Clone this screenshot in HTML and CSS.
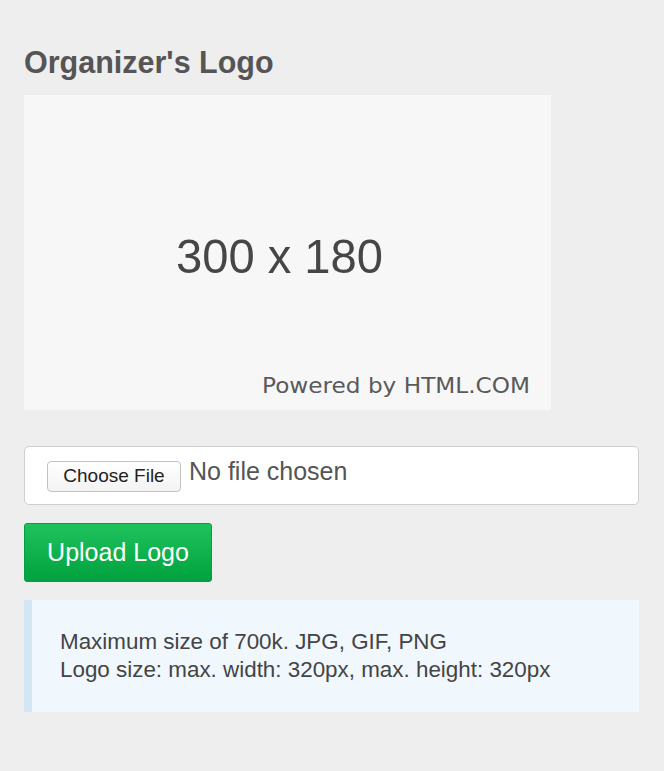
FILE: index.html
```html
<!DOCTYPE html>
<html lang="en">
<head>
    <meta charset="UTF-8">
    <meta name="viewport" content="width=device-width, initial-scale=1.0">
    <title>Organizer's Logo</title>
    <link rel="stylesheet" href="styles.css">
</head>
<body>
    <div class="logo-panel">
        <h2 class="panel-title">Organizer's Logo</h2>
        <div class="logo-preview">
            <svg width="527" height="315" viewBox="0 0 527 315">
                <rect width="527" height="315" fill="#f7f7f7"/>
                <text x="152" y="178" class="size-label" textLength="207" lengthAdjust="spacingAndGlyphs">300 x 180</text>
                <text x="238" y="298" class="powered-label" textLength="268" lengthAdjust="spacingAndGlyphs">Powered by HTML.COM</text>
            </svg>
        </div>
        <div class="file-field">
            <span class="choose-btn">Choose File</span>
            <span class="file-name">No file chosen</span>
        </div>
        <button class="upload-btn">Upload Logo</button>
        <div class="info-note">
            Maximum size of 700k. JPG, GIF, PNG<br>
            Logo size: max. width: 320px, max. height: 320px
        </div>
    </div>
</body>
</html>
```

FILE: styles.css
```css
body {
    margin: 0;
    background-color: #eeeeee;
    font-family: "Liberation Sans", Arial, sans-serif;
    color: #555;
}
.logo-panel {
    padding: 45px 25px 40px 24px;
    display: flex;
    flex-direction: column;
    align-items: flex-start;
}
.panel-title {
    margin: 0 0 16px;
    font-size: 30.5px;
    line-height: 34px;
    font-weight: bold;
    color: #555;
}
.logo-preview {
    width: 527px;
    height: 315px;
}
.logo-preview svg {
    display: block;
}
.size-label {
    font-family: "Liberation Sans", Arial, sans-serif;
    font-size: 49px;
    fill: #464646;
}
.powered-label {
    font-family: "DejaVu Sans", Verdana, sans-serif;
    font-size: 22px;
    fill: #5a5a5a;
}
.file-field {
    box-sizing: border-box;
    width: 100%;
    height: 59px;
    margin-top: 36px;
    padding: 0 22px;
    display: flex;
    align-items: center;
    background-color: white;
    border: 1px solid #cfcfcf;
    border-radius: 5px;
}
.choose-btn {
    box-sizing: border-box;
    width: 134px;
    height: 31px;
    margin-top: 1px;
    display: flex;
    align-items: center;
    justify-content: center;
    font-size: 19px;
    color: #222;
    background: linear-gradient(#ffffff, #f3f3f3);
    border: 1px solid #c2c2c2;
    border-radius: 4px;
}
.file-name {
    margin-left: 8px;
    margin-bottom: 8px;
    font-size: 25px;
    color: #555;
}
.upload-btn {
    box-sizing: border-box;
    width: 188px;
    height: 59px;
    margin-top: 18px;
    padding: 0;
    font-family: "Liberation Sans", Arial, sans-serif;
    font-size: 25px;
    color: white;
    background: linear-gradient(#1fc35d, #00a13e);
    border: 1px solid #03a040;
    border-radius: 3px;
    cursor: pointer;
}
.info-note {
    box-sizing: border-box;
    width: 100%;
    margin-top: 18px;
    padding: 28px;
    background-color: #f0f7fd;
    border-left: 8px solid #d3e6f4;
    font-size: 22.4px;
    line-height: 28px;
    color: #444;
}
```
